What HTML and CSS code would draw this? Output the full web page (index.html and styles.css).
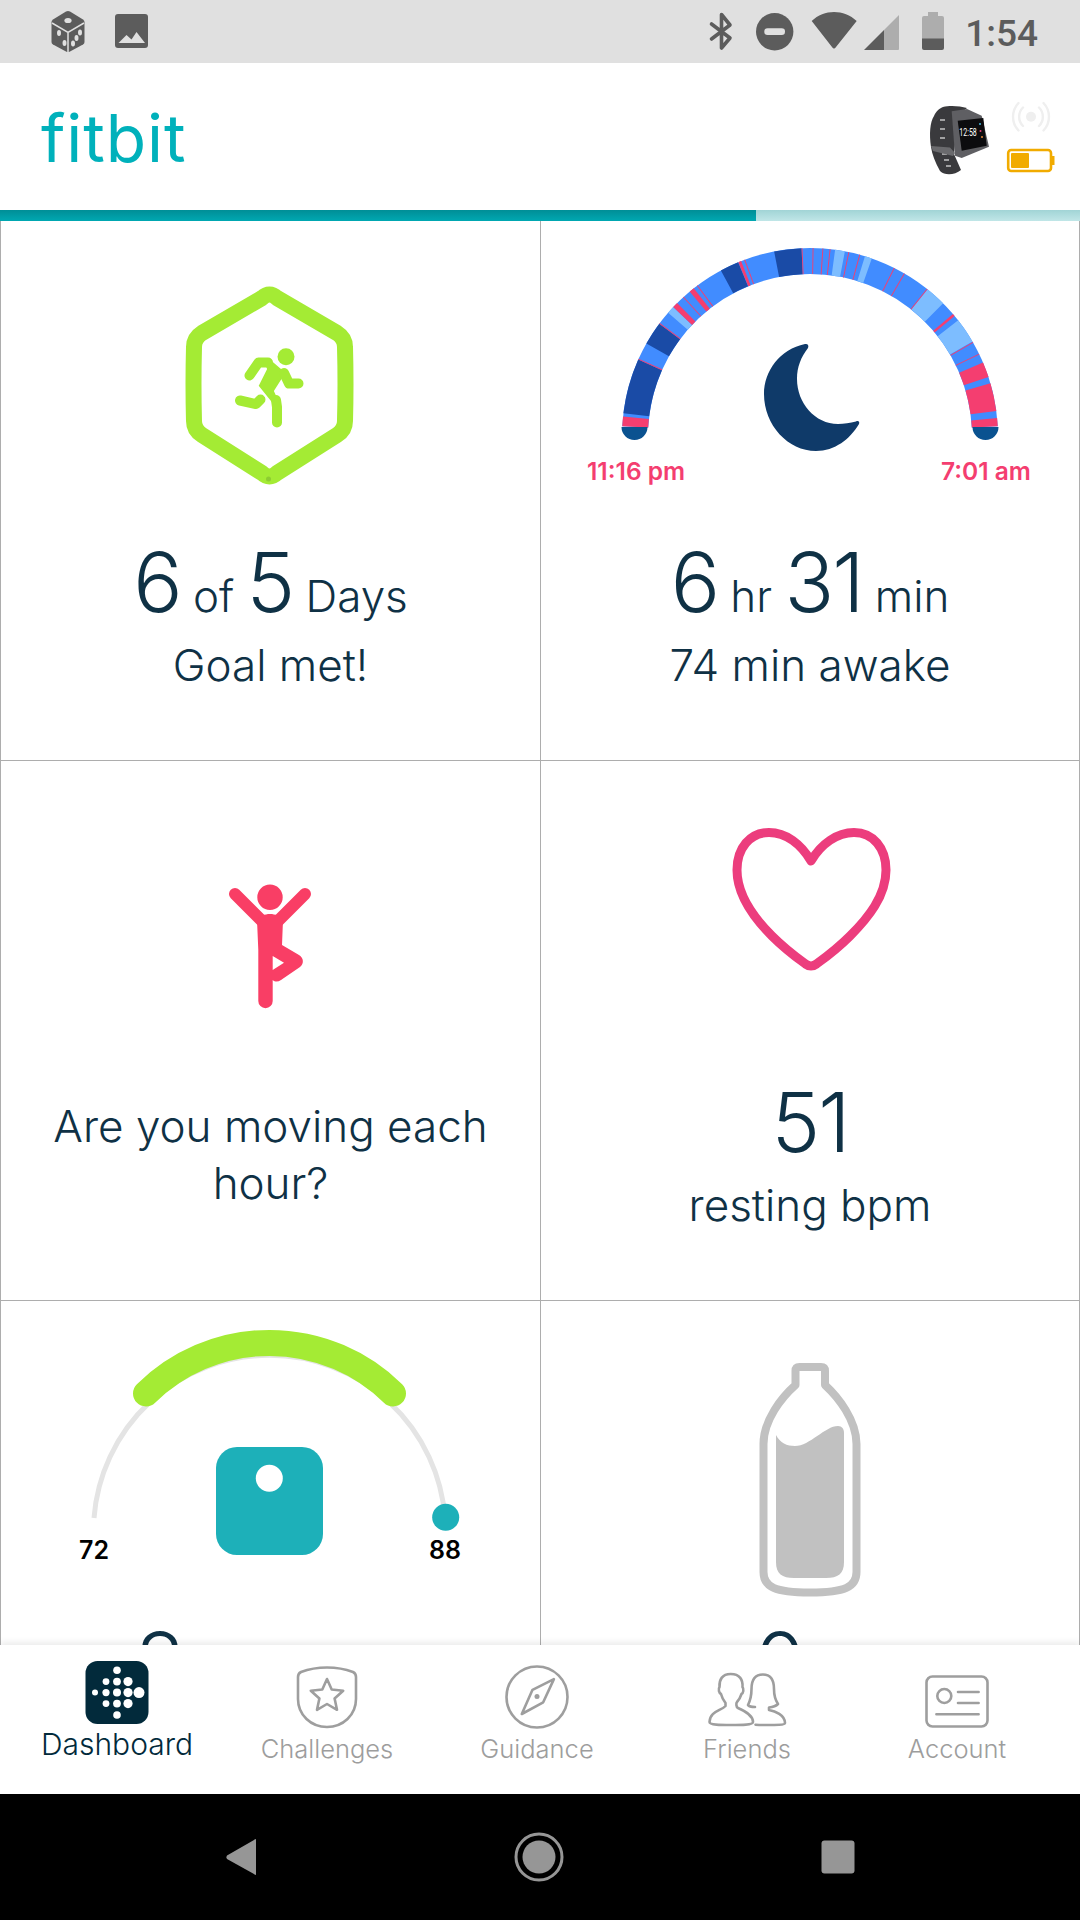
FILE: index.html
```html
<!DOCTYPE html>
<html lang="en">
<head>
  <meta charset="UTF-8" />
  <meta name="viewport" content="width=device-width, initial-scale=1.0" />
  <title>Fitbit Dashboard</title>
  <link rel="stylesheet" href="styles.css">
</head>
<body>
<div class="app">

  <div class="status-bar">
    <svg class="status-left" viewBox="40 0 120 63">
      <path class="ic" d="M66 11.5Q68 10.5 70 11.5L83 19.5Q84.5 20.5 84.5 22V42Q84.5 43.5 83 44.5L70 51.5Q68 52.5 66 51.5L53 44.5Q51.5 43.5 51.5 42V22Q51.5 20.5 53 19.5Z"/>
      <path class="cut-line" d="M52 23L68 32.5L84 23M68 32.5V52"/>
      <ellipse class="cut" cx="68" cy="20.5" rx="3.6" ry="2.6"/>
      <ellipse class="cut" cx="59" cy="33" rx="2" ry="3"/>
      <ellipse class="cut" cx="64.5" cy="43" rx="2" ry="3"/>
      <ellipse class="cut" cx="80" cy="32.5" rx="2" ry="3"/>
      <ellipse class="cut" cx="76.5" cy="38" rx="2" ry="3"/>
      <ellipse class="cut" cx="73" cy="43.5" rx="2" ry="3"/>
      <rect class="ic" x="115" y="14" width="33" height="34" rx="3"/>
      <path class="cut" d="M118.5 43L126.5 35L131.5 39.5L136.5 32L145 43Z"/>
    </svg>
    <div class="status-right">
      <svg class="status-icons" viewBox="705 0 245 63">
        <path class="bt" d="M712.5 24L731 38L722.5 48V14.5L731 25L712.5 39"/>
        <circle class="ic" cx="775.7" cy="31.7" r="18.7"/>
        <rect class="cut" x="765.3" y="28.3" width="20.7" height="6.7" rx="3.3"/>
        <path class="ic" d="M812.7 21C825 9 845 9 857.7 21L837 47Q835 50 833 47Z"/>
        <path class="dim" d="M885 50H899Q900 50 900 49V15L885 30Z"/>
        <path class="ic" d="M865 50H885V30Z"/>
        <path class="dim" d="M929 16V12H939V16H943Q945 16 945 18V39H923V18Q923 16 925 16Z"/>
        <path class="ic" d="M923 38.5H945V48Q945 50 943 50H925Q923 50 923 48Z"/>
      </svg>
      <span class="clock">1:54</span>
    </div>
  </div>

  <div class="top-bar">
    <span class="logo">fitbit</span>
    <svg class="device" viewBox="925 95 135 80">
      <path class="band" d="M943 103C950 101 960 102 967 104L958 112L954 150L961 166C955 171 945 172 940 167C935 158 932 150 931 143C929 130 930 118 934 112C936 107 940 104 943 103Z"/>
      <path class="band-hole" d="M940 116H945M940 125H945M940 134H945M942 150H947M944 156H949M946 162H951"/>
      <path class="clasp" d="M931 142L950 143.500L955 149L953 152L933 147Z"/>
      <path class="case" d="M951.700 107.300L967 105L981.700 111.700L989 142.700L961.700 154L955 151.700Z"/>
      <path class="screen" d="M957.700 116.700L983.300 114L986.700 141.700L961.700 146.700Z"/>
      <text class="watch-time" x="959.300" y="131.500" textLength="17.500" lengthAdjust="spacingAndGlyphs">12:58</text>
      <circle class="watch-dot-a" cx="980" cy="120" r="1"/>
      <circle class="watch-dot-b" cx="980.500" cy="127" r="1"/>
      <circle class="watch-dot-c" cx="982" cy="133" r="1"/>
      <circle class="radio-dot" cx="1031" cy="112.700" r="5"/>
      <path class="radio" d="M1023 103.500A13 13 0 0 0 1023 122M1039 103.500A13 13 0 0 1 1039 122M1018.500 99A20 20 0 0 0 1018.500 126.500M1043.500 99A20 20 0 0 1 1043.500 126.500"/>
      <rect class="batt" x="1008.200" y="146" width="42.800" height="21" rx="3"/>
      <rect class="batt-fill" x="1011" y="149" width="18" height="15" rx="1"/>
      <rect class="batt-fill" x="1052" y="152" width="2.500" height="9"/>
    </svg>
  </div>

  <div class="progress"><div class="progress-fill" style="width: 70%"></div></div>

  <div class="grid">

    <div class="cell cell-first">
      <svg class="graphic" viewBox="1 221 539 310">
        <path class="hex" d="M262 298Q269.500 291 277 298L337 333Q345 338 345 347Q346 384 345 421Q345 430 337 435L277 473Q269.500 480 262 473L202 435Q194 430 194 421Q193 384 194 347Q194 338 202 333Z"/>
        <circle class="hex-dot" cx="268.500" cy="479" r="2.500"/>
        <circle class="lime" cx="286" cy="356.700" r="8.500"/>
        <path class="runner-line" d="M240 400.500L256 404L260.500 399.500"/>
        <path class="runner-body" d="M266 369L257.500 386L272 404L281 404L275 391L282 380L286 372L272 360H262Z"/>
        <path class="runner-line" d="M249.500 375.500L258.500 362.500H268M284 373L289 383.500H298.500M276 400L277 407V422.500"/>
      </svg>
      <div class="stat"><span class="big">6</span> of <span class="big">5</span> Days</div>
      <div class="sub">Goal met!</div>
    </div>

    <div class="cell">
      <svg class="graphic" viewBox="541 221 538 310">
        <circle class="sleep sleep-base" cx="810" cy="436" r="175" pathLength="360" transform="rotate(180 810 436)"/>
        <circle class="sleep sleep-deep" cx="810" cy="436" r="175" pathLength="360" transform="rotate(180 810 436)"/>
        <circle class="sleep sleep-light" cx="810" cy="436" r="175" pathLength="360" transform="rotate(180 810 436)"/>
        <circle class="sleep sleep-awake" cx="810" cy="436" r="175" pathLength="360" transform="rotate(180 810 436)"/>
        <path class="sleep-cap" d="M621.500 427H647.500A13 13 0 0 1 621.500 427ZM972.500 427H998.500A13 13 0 0 1 972.500 427Z"/>
        <path class="moon" d="M805 344C780 349 764 371 764 394C764 425 788 451 816 451C835 451 850 439 859 424C860 421.500 858 420.500 856 421.500C850 423 844 424 838 424C815 424 797 403 797 379C797 367 801 357 808 348C809 345.500 808 343.500 805 344Z"/>
        <text class="sleep-time" x="587" y="480">11:16 pm</text>
        <text class="sleep-time" x="941" y="480">7:01 am</text>
      </svg>
      <div class="stat"><span class="big">6</span> hr <span class="big">31</span> min</div>
      <div class="sub">74 min awake</div>
    </div>

    <div class="cell cell-first">
      <svg class="graphic" viewBox="1 761 539 310">
        <path class="arm" d="M235 894L263 922M305 894L277 922"/>
        <path class="coral" fill-rule="evenodd" d="M257 920C262 912 278 912 283 920L282 945L299 955C304 958 304 964 300 967L281 980C278 982 275 982 272.700 980V1001A7.200 7.200 0 0 1 258.300 1001V950ZM272.700 956V970L284 962.700Z"/>
        <circle class="head" cx="270" cy="897.300" r="14.200"/>
      </svg>
      <div class="message">Are you moving each hour?</div>
    </div>

    <div class="cell">
      <svg class="graphic" viewBox="541 761 538 310">
        <path class="heart" d="M811 861C801 844 786 832.500 769 832.500C750 832.500 737 848 737 870C737 896 754 918 772 936C786 950 800 960 805.500 964Q811 968 816.500 964C822 960 836 950 850 936C868 918 886 896 886 870C886 848 873 832.500 854 832.500C837 832.500 821 844 811 861Z"/>
      </svg>
      <div class="stat"><span class="big">51</span></div>
      <div class="sub">resting bpm</div>
    </div>

    <div class="cell cell-first">
      <svg class="graphic" viewBox="1 1301 539 310">
        <path class="scale-track" d="M94 1518A176 176 0 0 1 445 1518"/>
        <path class="scale-range" d="M146 1393.500A176 176 0 0 1 393 1393.500"/>
        <circle class="teal" cx="445.700" cy="1517.300" r="13.500"/>
        <rect class="teal" x="216" y="1447" width="107" height="108" rx="21"/>
        <circle class="hole" cx="269.300" cy="1478.300" r="13.500"/>
        <text class="scale-label" x="94" y="1559">72</text>
        <text class="scale-label" x="445" y="1559">88</text>
      </svg>
      <div class="stat"><span class="big">8</span> lbs to goal</div>
    </div>

    <div class="cell">
      <svg class="graphic" viewBox="541 1301 538 310">
        <path class="bottle" d="M810 1367H821Q825 1367 825 1371V1385C838 1397 856.500 1420 856.500 1444V1572C856.500 1587 845 1592.500 810 1592.500C775 1592.500 763.500 1587 763.500 1572V1444C763.500 1420 782 1397 795.500 1385V1371Q795.500 1367 799.500 1367Z"/>
        <path class="water" d="M776 1435C780 1443 787 1446 795 1446C810 1446 825 1426 838 1426C842 1426 844 1429 844 1433V1562C844 1574 838 1578 826 1578H794C782 1578 776 1574 776 1562Z"/>
      </svg>
      <div class="stat"><span class="big">0</span> oz</div>
    </div>

  </div>

  <div class="tabs">
    <div class="tab tab-active">
      <svg class="tab-icon" viewBox="0 0 64 64">
        <rect class="tile" x="0.500" y="0" width="63" height="63" rx="12"/>
        <g class="tile-dots">
          <circle cx="32" cy="9.300" r="3.800"/>
          <circle cx="21" cy="20.600" r="3.400"/><circle cx="32" cy="20.600" r="3.900"/><circle cx="43" cy="20.600" r="4.600"/>
          <circle cx="10" cy="31.600" r="3"/><circle cx="21" cy="31.600" r="3.600"/><circle cx="32" cy="31.600" r="4"/><circle cx="43" cy="31.600" r="4.600"/><circle cx="54" cy="31.600" r="5.500"/>
          <circle cx="21" cy="42.600" r="3.400"/><circle cx="32" cy="42.600" r="3.900"/><circle cx="43" cy="42.600" r="4.600"/>
          <circle cx="32" cy="54" r="3.800"/>
        </g>
      </svg>
      <span class="tab-label">Dashboard</span>
    </div>
    <div class="tab">
      <svg class="tab-icon" viewBox="0 0 64 64">
        <path class="outline" d="M32 2.500C42 2.500 50 4 58 7C60 8 61 9 61 12V34C61 50 48 62 32 62C16 62 3 50 3 34V12C3 9 4 8 6 7C14 4 22 2.500 32 2.500Z"/>
        <path class="outline" d="M32 14L36.700 24.500L48.200 25.700L39.600 33.500L42 44.800L32 39L22 44.800L24.400 33.500L15.800 25.700L27.300 24.500Z"/>
      </svg>
      <span class="tab-label">Challenges</span>
    </div>
    <div class="tab">
      <svg class="tab-icon" viewBox="0 0 64 64">
        <circle class="outline" cx="32" cy="32" r="30.500"/>
        <path class="outline" d="M48.900 14.100L27.500 24.800L16.800 49L38.200 37.300Z"/>
        <circle class="tab-dot" cx="32" cy="31.500" r="2.500"/>
      </svg>
      <span class="tab-label">Guidance</span>
    </div>
    <div class="tab">
      <svg class="tab-icon tab-icon-wide" viewBox="0 0 80 64">
        <path class="outline" d="M23.700 9C15 9 12 15 12.500 22C11 24 12 28 14 29C15 33 17 36 18.500 38V41C14 46 3 46 2.500 57C2.500 60 14 60 24 60C34 60 46 60 46 57C46 50 38 46 31 43C29 42 29 38 30 37C32 35 33.500 32 34.500 29C36.500 28 37 24 35.500 22C36 15 33 9 23.700 9Z"/>
        <path class="outline" d="M48.500 59.700C52 60 55 60 60 60C68 60 78 60 78 58C78 50 68 46 62 45V42.500C66 42 69 41 71 39C69 36 67 31 67 24C67 16 64 9.500 55.900 9.500C47 9.500 44.500 16 44.500 24C44.500 31 43 36 41 40C42 41.500 45 42 48 42"/>
      </svg>
      <span class="tab-label">Friends</span>
    </div>
    <div class="tab">
      <svg class="tab-icon" viewBox="0 0 64 64">
        <rect class="outline" x="1.500" y="11.500" width="61" height="50" rx="6"/>
        <circle class="outline" cx="19.300" cy="31" r="7"/>
        <path class="outline" d="M33 27H53.600M33 38H53.600M11.400 49.300H53.600"/>
      </svg>
      <span class="tab-label">Account</span>
    </div>
  </div>

  <div class="system-nav">
    <svg class="sys-icon" viewBox="0 0 60 60"><path d="M46 13V47Q46 49 44 47L17 32Q15.500 30 17 28.500L44 13Q46 11 46 13Z"/></svg>
    <svg class="sys-icon" viewBox="0 0 60 60"><circle class="sys-ring" cx="30" cy="30" r="23"/><circle cx="30" cy="30" r="16.500"/></svg>
    <svg class="sys-icon" viewBox="0 0 60 60"><rect x="13.500" y="13.500" width="33" height="33" rx="3"/></svg>
  </div>

</div>
</body>
</html>
```

FILE: styles.css
```css
html, body {
  margin: 0;
  padding: 0;
  background: #fff;
  font-family: "Inter", "Lato", sans-serif;
  color: #0f3145;
}
.app {
  width: 1080px;
  height: 1920px;
  display: flex;
  flex-direction: column;
  overflow: hidden;
}

/* status bar */
.status-bar {
  flex: 0 0 63px;
  background: #e0e0e0;
  display: flex;
  justify-content: space-between;
  align-items: center;
}
.status-left {
  width: 120px;
  height: 63px;
  margin-left: 40px;
}
.status-right {
  display: flex;
  align-items: center;
  padding-right: 42px;
}
.status-icons {
  width: 245px;
  height: 63px;
}
.clock {
  font-family: "Roboto", sans-serif;
  font-weight: 500;
  font-size: 37px;
  color: #5c5c5c;
  margin-left: 16px;
  padding-top: 3px;
}
.ic { fill: #5c5c5c; }
.dim { fill: #adadad; }
.cut { fill: #e0e0e0; }
.cut-line { fill: none; stroke: #e0e0e0; stroke-width: 1.5; }
.bt { fill: none; stroke: #5c5c5c; stroke-width: 3.6; stroke-linejoin: round; stroke-linecap: round; }

/* header */
.top-bar {
  flex: 0 0 147px;
  display: flex;
  justify-content: space-between;
  align-items: center;
  padding: 0 20px 0 41px;
}
.logo {
  font-size: 66px;
  font-weight: 400;
  line-height: 1;
  color: #00b1bb;
  letter-spacing: 0.9px;
  margin-top: 2px;
}
.device {
  width: 135px;
  height: 80px;
  margin-top: 5px;
}
.band { fill: #3a3a3d; }
.band-hole { fill: none; stroke: #c4c4c4; stroke-width: 1.3; }
.clasp { fill: #6a6a6d; }
.case { fill: #5f5f63; }
.screen { fill: #0c0c0e; }
.watch-time { font-size: 10px; font-weight: 400; fill: #fff; font-family: "Roboto", sans-serif; }
.watch-dot-a { fill: #49b9dd; }
.watch-dot-b { fill: #e8407a; }
.watch-dot-c { fill: #e88a3a; }
.radio-dot { fill: #efefef; }
.radio { fill: none; stroke: #efefef; stroke-width: 2.4; stroke-linecap: round; }
.batt { fill: #fff; stroke: #f1ab00; stroke-width: 2.6; }
.batt-fill { fill: #f1ab00; }

/* sync progress */
.progress {
  flex: 0 0 11px;
  background: linear-gradient(#a1d4d6, #c0e6e7);
}
.progress-fill {
  height: 100%;
  background: linear-gradient(#008e96, #00a8b2);
}

/* tiles */
.grid {
  flex: 1;
  min-height: 0;
  overflow: hidden;
  display: grid;
  grid-template-columns: 541px 539px;
  grid-auto-rows: 540px;
}
.cell {
  box-sizing: border-box;
  border-right: 1px solid #adadad;
  border-bottom: 1px solid #adadad;
  text-align: center;
}
.cell-first {
  border-left: 1px solid #adadad;
}
.graphic {
  display: block;
  width: 100%;
  height: 310px;
}
.stat {
  font-size: 44px;
  font-weight: 300;
  line-height: 103px;
  height: 100px;
}
.big {
  font-size: 82px;
  font-weight: 300;
  letter-spacing: -2px;
}
.sub {
  font-size: 44px;
  font-weight: 300;
  line-height: 56px;
  margin-top: 6px;
}
.message {
  font-size: 44px;
  font-weight: 300;
  line-height: 57px;
  margin-top: 27px;
  padding: 0 30px;
}

/* tile graphics */
.hex { fill: none; stroke: #a4eb34; stroke-width: 16; stroke-linejoin: round; }
.hex-dot { fill: #8dcc32; }
.lime { fill: #a4eb34; }
.runner-line { fill: none; stroke: #a4eb34; stroke-width: 10; stroke-linecap: round; stroke-linejoin: round; }
.runner-body { fill: #a4eb34; stroke: #fff; stroke-width: 2; }
.sleep { fill: none; stroke-width: 26; }
.sleep-base { stroke: #418cff; stroke-dasharray: 0 3 174 183; }
.sleep-deep { stroke: #1a4ba6; stroke-dasharray: 0 7 17 5.5 7.2 25 5.8 11.5 8.4 272.6; }
.sleep-light { stroke: #7dbdff; stroke-dasharray: 0 41 2.3 54.4 3 6.3 2.2 19.5 6.4 6.9 7.8 210.2; }
.sleep-awake {
  stroke: #f43e70;
  stroke-dasharray: 0 3 3 18 .3 12.4 .3 6.3 1.7 2.5 .3 2.4 1.6 1.2 .3 14.3 .9 1 .3 17.6 .3 3.1 .3 2.7 .3 1.9 .3 5.5 .3 3.1 .3 11 .3 3.2 .3 8.1 .3 10.8 .8 9.7 .3 3.7 .3 2.7 4.7 2 8.6 2.2 2.5 183;
}
.sleep-cap { fill: #0a5290; }
.moon { fill: #0f3a69; }
.sleep-time { font-size: 24.5px; font-weight: 600; fill: #f43e70; }
.arm { fill: none; stroke: #f93e65; stroke-width: 12; stroke-linecap: round; }
.coral { fill: #f93e65; }
.head { fill: #f93e65; stroke: #fff; stroke-width: 3; }
.heart { fill: none; stroke: #ec3d7d; stroke-width: 9; stroke-linejoin: round; }
.scale-track { fill: none; stroke: #e4e4e4; stroke-width: 5; }
.scale-range { fill: none; stroke: #a4eb34; stroke-width: 26; stroke-linecap: round; }
.teal { fill: #1db0b9; }
.hole { fill: #fff; }
.scale-label { font-size: 25px; font-weight: 600; fill: #000; text-anchor: middle; }
.bottle { fill: none; stroke: #c1c1c1; stroke-width: 8; stroke-linejoin: round; }
.water { fill: #c1c1c1; }

/* bottom tabs */
.tabs {
  flex: 0 0 149px;
  position: relative;
  background: #fff;
  box-shadow: 0 -3px 6px rgba(0,0,0,0.08);
  display: flex;
  box-sizing: border-box;
  padding: 0 18px 0 12px;
}
.tab {
  width: 210px;
  display: flex;
  flex-direction: column;
  align-items: center;
  padding-top: 20px;
  box-sizing: border-box;
}
.tab-active {
  padding-top: 16px;
}
.tab-icon {
  width: 64px;
  height: 64px;
}
.tab-icon-wide {
  width: 80px;
}
.tab-label {
  font-size: 25.5px;
  font-weight: 300;
  line-height: 36px;
  margin-top: 2px;
  color: #9d9d9d;
}
.tab-active .tab-label {
  font-size: 30px;
  font-weight: 300;
  margin-top: 1px;
  color: #022a3b;
}
.tile { fill: #022a3b; }
.tile-dots circle { fill: #fff; }
.outline { fill: none; stroke: #9e9e9e; stroke-width: 2.6; stroke-linejoin: round; stroke-linecap: round; }
.tab-dot { fill: #9e9e9e; }

/* android nav */
.system-nav {
  flex: 0 0 126px;
  background: #000;
  display: flex;
  align-items: center;
  gap: 239px;
  padding-left: 210px;
}
.sys-icon {
  width: 60px;
  height: 60px;
  fill: #969696;
}
.sys-ring {
  fill: none;
  stroke: #969696;
  stroke-width: 3;
}
```
